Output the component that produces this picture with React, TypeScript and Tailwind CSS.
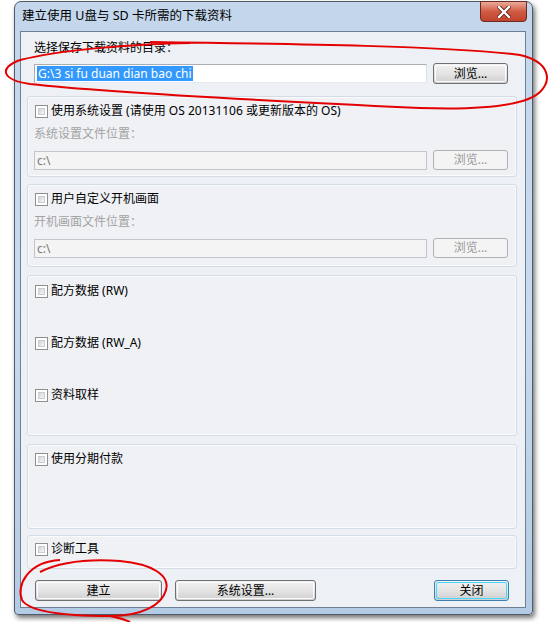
import React from 'react';

const FONT = "font-['Noto_Sans','Noto_Sans_CJK_SC',sans-serif]";

function CheckBox() {
  return (
    <span className="ml-[1px] w-[13px] h-[13px] shrink-0 border border-[#8e8f8f] bg-white p-[2px]">
      <span className="block w-full h-full border border-[#c9ccd0] bg-gradient-to-br from-[#d2d4d8] to-[#f7f7f7]" />
    </span>
  );
}

function CheckRow({ label }: { label: string }) {
  return (
    <div className="flex items-center h-[16px] gap-[3px] text-[12px] text-black leading-[16px]">
      <CheckBox />
      <span>{label}</span>
    </div>
  );
}

function WinButton({ label, width, disabled, focused }: { label: string; width: string; disabled?: boolean; focused?: boolean }) {
  if (disabled) {
    return (
      <div className={`${width} h-[20px] rounded-[3px] border border-[#adb2b5] bg-[#f4f4f4] flex items-center justify-center text-[12px] text-[#9a9a9a]`}>
        {label}
      </div>
    );
  }
  return (
    <div
      className={`${width} h-[21px] rounded-[3px] border ${focused ? 'border-[#3c7fb1]' : 'border-[#707070]'} p-[1px] bg-gradient-to-b from-[#f2f2f2] via-[#e4e4e4] to-[#cfcfcf]`}
    >
      <div className={`w-full h-full rounded-[2px] border ${focused ? 'border-[#48d8fb]' : 'border-[#fbfbfb]'} flex items-center justify-center text-[12px] text-black leading-none`}>
        {label}
      </div>
    </div>
  );
}

function PathField({ value, disabled, selected }: { value: string; disabled?: boolean; selected?: boolean }) {
  return (
    <div
      className={`w-[393px] h-[19px] border flex items-center px-[2px] text-[12px] ${
        disabled ? 'border-[#c2c5c9] bg-[#f4f4f4] text-[#7a7a7a]' : 'border-[#abadb3] border-b-[#e3e9ef] border-r-[#dbdfe6] bg-white'
      }`}
    >
      {selected ? (
        <span className="bg-[#3399ff] text-white leading-[15px] px-[1px]">{value}</span>
      ) : (
        <span className="leading-[15px]">{value}</span>
      )}
    </div>
  );
}

function Group({ height, top, className, children }: { height: string; top: string; className?: string; children: React.ReactNode }) {
  return (
    <div className={`${height} ${top} rounded-[3px] border border-[#d3dce4] bg-[#f0f2f5]/60 shadow-[inset_0_0_0_1px_#f9fbfd] flex flex-col pl-[6px] ${className ?? ''}`}>
      {children}
    </div>
  );
}

export default function App() {
  return (
    <div className={`relative w-[549px] h-[622px] bg-white overflow-hidden pl-[14px] pt-[1px] ${FONT}`}>
      {/* window frame */}
      <div className="relative w-[519px] h-[614px] rounded-t-[7px] rounded-b-[4px] border border-[#4f5b69] bg-gradient-to-b from-[#c3d6eb] via-[#c9dbee] to-[#b3cbe4] shadow-[2px_3px_5px_rgba(0,0,0,0.55)] flex flex-col">
        {/* title bar */}
        <div className="h-[29px] flex items-center pl-[7px] text-[12.5px] text-black">
          建立使用 U盘与 SD 卡所需的下载资料
        </div>

        {/* close button */}
        <div className="absolute left-[465px] top-[-1px] w-[47px] h-[21px] rounded-b-[4px] border border-[#6b2a22] bg-gradient-to-b from-[#e9a99a] via-[#d05a43] to-[#c1442c] flex items-center justify-center">
          <svg width="14" height="12" viewBox="0 0 14 12">
            <path d="M2 1 L12 11 M12 1 L2 11" stroke="#5a1d15" strokeWidth="4" strokeLinecap="square" />
            <path d="M2 1 L12 11 M12 1 L2 11" stroke="#ffffff" strokeWidth="2.4" strokeLinecap="square" />
          </svg>
        </div>

        {/* client area */}
        <div className="ml-[5px] w-[506px] h-[577px] border border-[#6f7e91] bg-[#edf0f4] flex flex-col pl-[6px] pr-[8px]">
          {/* directory */}
          <div className="flex flex-col pt-[8px] pl-[7px]">
            <div className="text-[12px] leading-[16px] text-black">选择保存下载资料的目录：</div>
            <div className="flex items-center gap-[6px] mt-[7px]">
              <PathField value="G:\3 si fu duan dian bao chi" selected />
              <WinButton label="浏览..." width="w-[75px]" />
            </div>
          </div>

          <Group height="h-[81px]" top="mt-[12px]">
            <div className="pt-[6px]">
              <CheckRow label="使用系统设置 (请使用 OS 20131106 或更新版本的 OS)" />
            </div>
            <div className="mt-[7px] text-[12px] leading-[16px] text-[#a3a3a3]">系统设置文件位置：</div>
            <div className="flex items-center gap-[6px] mt-[8px]">
              <PathField value="c:\" disabled />
              <WinButton label="浏览..." width="w-[75px]" disabled />
            </div>
          </Group>

          <Group height="h-[83px]" top="mt-[7px]">
            <div className="pt-[6px]">
              <CheckRow label="用户自定义开机画面" />
            </div>
            <div className="mt-[7px] text-[12px] leading-[16px] text-[#a3a3a3]">开机画面文件位置：</div>
            <div className="flex items-center gap-[6px] mt-[8px]">
              <PathField value="c:\" disabled />
              <WinButton label="浏览..." width="w-[75px]" disabled />
            </div>
          </Group>

          <Group height="h-[161px]" top="mt-[8px]" className="pt-[7px] gap-[36px]">
            <CheckRow label="配方数据 (RW)" />
            <CheckRow label="配方数据 (RW_A)" />
            <CheckRow label="资料取样" />
          </Group>

          <Group height="h-[85px]" top="mt-[8px]" className="pt-[6px]">
            <CheckRow label="使用分期付款" />
          </Group>

          <Group height="h-[34px]" top="mt-[6px]" className="pt-[5px]">
            <CheckRow label="诊断工具" />
          </Group>

          {/* bottom buttons */}
          <div className="flex items-center mt-[11px] pl-[8px] pr-[8px]">
            <WinButton label="建立" width="w-[127px]" />
            <div className="ml-[13px]">
              <WinButton label="系统设置..." width="w-[141px]" />
            </div>
            <div className="ml-auto">
              <WinButton label="关闭" width="w-[75px]" focused />
            </div>
          </div>
        </div>
      </div>

      {/* red hand-drawn annotations */}
      <svg className="absolute inset-0 pointer-events-none" width="549" height="622" viewBox="0 0 549 622">
        <path
          d="M 190 43 C 130 44, 60 50, 20 60 C -2 68, 2 80, 30 84 C 100 92, 250 100, 420 108 C 480 110, 525 106, 540 92 C 552 80, 550 62, 520 55 C 450 46, 300 44, 150 42"
          fill="none"
          stroke="#e40000"
          strokeWidth="2"
        />
        <path
          d="M 60 560 C 28 562, 16 585, 22 600 C 30 613, 70 616, 110 616 C 142 616, 162 605, 166 590 C 170 575, 152 564, 120 561 C 90 559, 60 562, 40 572"
          fill="none"
          stroke="#e40000"
          strokeWidth="2"
        />
        <path d="M 110 616 C 120 618, 126 620, 130 622" fill="none" stroke="#e40000" strokeWidth="2" />
      </svg>
    </div>
  );
}
